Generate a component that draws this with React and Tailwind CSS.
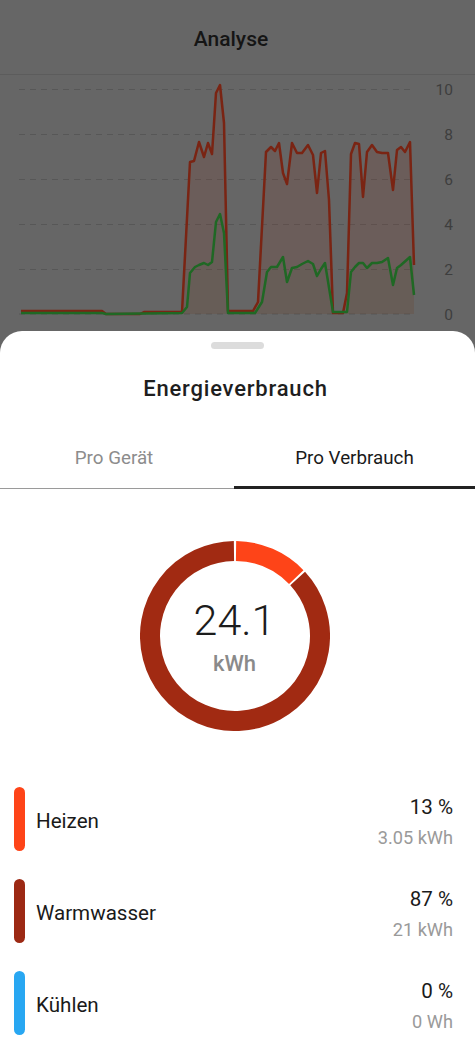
import React from "react";

const red = [[21,311],[102,311],[106,314],[140,314],[144,312],[182,312],[190,162],[194,161],[199,142],[204,157],[208,143],[212,154],[216,93],[220,85],[224,123],[228,311],[253,311],[258,302],[266,152],[271,147],[275,151],[279,143],[283,173],[287,184],[292,143],[297,153],[302,153],[308,145],[313,155],[317,193],[321,153],[325,151],[329,200],[333,313],[343,313],[347,293],[351,154],[355,143],[359,144],[363,197],[367,152],[372,145],[377,152],[382,153],[388,153],[393,190],[397,150],[401,147],[405,152],[410,142],[414,265]];
const green = [[21,313],[102,313],[106,314],[182,313],[187,307],[190,273],[195,267],[199,265],[204,263],[208,265],[212,262],[216,222],[220,214],[224,233],[228,313],[255,313],[262,302],[267,272],[271,267],[277,267],[283,257],[287,282],[292,268],[297,267],[302,264],[308,261],[313,264],[317,276],[321,269],[325,263],[333,312],[347,312],[351,272],[355,267],[359,263],[363,263],[367,268],[372,263],[377,263],[382,262],[388,258],[393,285],[397,268],[401,265],[410,257],[414,295]];

const line = (pts) => pts.map((p, i) => (i ? "L" : "M") + p[0] + " " + p[1]).join(" ");
const area = (pts) => line(pts) + ` L${pts[pts.length - 1][0]} 314 L${pts[0][0]} 314 Z`;

function Chart() {
  const grid = [
    { v: "10", y: 89.5 },
    { v: "8", y: 134.5 },
    { v: "6", y: 179.5 },
    { v: "4", y: 224.5 },
    { v: "2", y: 269.5 },
    { v: "0", y: 314 },
  ];
  return (
    <svg width="475" height="256" viewBox="0 75 475 256" className="block">
      {grid.map((g) => (
        <g key={g.v}>
          <line x1="19" x2="410" y1={g.y} y2={g.y} stroke="#575757" strokeWidth="1" strokeDasharray="6 5" />
          <text x="453" y={g.y + 5.5} textAnchor="end" fontSize="15.5" fill="#3e3e3e" fontFamily="Roboto, sans-serif">{g.v}</text>
        </g>
      ))}
      <path d={area(red)} fill="#8a2c18" fillOpacity="0.15" />
      <path d={area(green)} fill="#1f6a26" fillOpacity="0.05" />
      <path d={line(red)} fill="none" stroke="#7a2413" strokeWidth="2.5" strokeLinejoin="round" />
      <path d={line(green)} fill="none" stroke="#1f6824" strokeWidth="2.5" strokeLinejoin="round" />
    </svg>
  );
}

function arc(cx, cy, r, a0, a1) {
  const rad = (a) => ((a - 90) * Math.PI) / 180;
  const x0 = cx + r * Math.cos(rad(a0));
  const y0 = cy + r * Math.sin(rad(a0));
  const x1 = cx + r * Math.cos(rad(a1));
  const y1 = cy + r * Math.sin(rad(a1));
  const large = a1 - a0 > 180 ? 1 : 0;
  return `M${x0} ${y0} A${r} ${r} 0 ${large} 1 ${x1} ${y1}`;
}

function Donut() {
  const split = 0.13 * 360;
  const g = 0.7;
  return (
    <div className="flex justify-center pr-[6px] mt-[52px]">
      <div className="relative w-[190px] h-[190px]">
        <svg width="190" height="190" viewBox="0 0 190 190" className="block">
          <path d={arc(95, 95, 85, g, split - g)} fill="none" stroke="#fe4418" strokeWidth="20" />
          <path d={arc(95, 95, 85, split + g, 360 - g)} fill="none" stroke="#a12a12" strokeWidth="20" />
        </svg>
        <div className="absolute inset-0 flex flex-col items-center justify-center">
          <div className="text-[43px] leading-[50px] font-light text-[#1c1c1c]">24.1</div>
          <div className="text-[22px] leading-[26px] font-medium text-[#8a8a8a] mt-[6px]">kWh</div>
        </div>
      </div>
    </div>
  );
}

function Row({ color, label, pct, val }) {
  return (
    <div className="flex items-center h-[92px]">
      <div className={`ml-[14px] w-[11px] h-[64px] rounded-full ${color}`} />
      <div className="ml-[11px] pt-[4px] text-[20.6px] leading-[24px] text-[#1a1a1a]">{label}</div>
      <div className="ml-auto mr-[22px] pt-[6px] flex flex-col items-end">
        <div className="text-[20.6px] leading-[24px] text-[#1a1a1a]">{pct}</div>
        <div className="text-[18.2px] leading-[24px] text-[#9a9a9a] mt-[7px]">{val}</div>
      </div>
    </div>
  );
}

export default function App() {
  return (
    <div className="w-[475px] h-[1057px] overflow-hidden bg-[#666666] flex flex-col" style={{ fontFamily: "Roboto, 'Noto Sans', sans-serif" }}>
      <div className="h-[75px] pt-[5px] pr-[13px] flex items-center justify-center border-b border-[#5c5c5c] text-[21px] font-medium text-[#151515] shrink-0">
        Analyse
      </div>
      <Chart />
      <div className="flex-1 bg-white rounded-t-[22px] flex flex-col">
        <div className="mx-auto mt-[11px] w-[53px] h-[7px] rounded-full bg-[#dcdcdc]" />
        <div className="mt-[26px] pr-[4px] text-center text-[22px] leading-[28px] font-medium tracking-[0.8px] text-[#1e1e1e]">Energieverbrauch</div>
        <div className="mt-[27px] flex h-[56px]">
          <div className="w-[234px] pr-[6px] flex items-center justify-center text-[18.8px] text-[#8c8c8c]">Pro Gerät</div>
          <div className="flex-1 flex items-center justify-center text-[18.8px] text-[#1a1a1a]">Pro Verbrauch</div>
        </div>
        <div className="flex h-[3px]">
          <div className="w-[234px] h-[3px] border-b border-[#9a9a9a]" />
          <div className="flex-1 bg-[#222222]" />
        </div>
        <Donut />
        <div className="mt-[42px]">
          <Row color="bg-[#fe4418]" label="Heizen" pct="13 %" val="3.05 kWh" />
          <Row color="bg-[#9c2914]" label="Warmwasser" pct="87 %" val="21 kWh" />
          <Row color="bg-[#28a7f2]" label="Kühlen" pct="0 %" val="0 Wh" />
        </div>
      </div>
    </div>
  );
}
